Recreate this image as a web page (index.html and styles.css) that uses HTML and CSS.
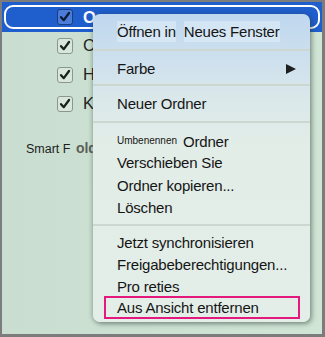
FILE: index.html
```html
<!DOCTYPE html>
<html>
<head>
<meta charset="utf-8">
<link rel="stylesheet" href="styles.css">
</head>
<body>
<div class="frame">
  <div class="row-selected">
    <div class="sel-outline">
      <span class="cb cb-sel"><svg viewBox="0 0 16 16"><path d="M3.5 8.2 L6.6 11.6 L12.6 3.4"/></svg></span>
      <span class="label label-sel">O</span>
    </div>
  </div>
  <div class="row">
    <span class="cb"><svg viewBox="0 0 16 16"><path d="M3.5 8.2 L6.6 11.6 L12.6 3.4"/></svg></span>
    <span class="label">C</span>
  </div>
  <div class="row">
    <span class="cb"><svg viewBox="0 0 16 16"><path d="M3.5 8.2 L6.6 11.6 L12.6 3.4"/></svg></span>
    <span class="label">H</span>
  </div>
  <div class="row">
    <span class="cb"><svg viewBox="0 0 16 16"><path d="M3.5 8.2 L6.6 11.6 L12.6 3.4"/></svg></span>
    <span class="label">K</span>
  </div>
  <div class="smart">Smart F <b class="smart-bold">old</b></div>

  <div class="menu">
    <div class="item item-open"><span class="hl">Öffnen in</span> <span class="hl hl-2">Neues Fenster</span></div>
    <div class="sep"></div>
    <div class="item item-sub"><span>Farbe</span><span class="arrow"></span></div>
    <div class="sep sep-b"></div>
    <div class="item">Neuer Ordner</div>
    <div class="sep"></div>
    <div class="group">
      <div class="item"><span class="tiny">Umbenennen</span> Ordner</div>
      <div class="item">Verschieben Sie</div>
      <div class="item">Ordner kopieren...</div>
      <div class="item">Löschen</div>
    </div>
    <div class="sep sep-low"></div>
    <div class="item tight">Jetzt synchronisieren</div>
    <div class="item tight">Freigabeberechtigungen...</div>
    <div class="item tight">Pro reties</div>
    <div class="item item-marked">Aus Ansicht entfernen</div>
  </div>
</div>
</body>
</html>
```
FILE: styles.css
```css
* { box-sizing: border-box; }
html, body { margin: 0; padding: 0; }
body { width: 325px; height: 337px; overflow: hidden; font-family: "Liberation Sans", Arial, sans-serif; }

.frame {
  position: relative;
  width: 325px;
  height: 337px;
  border-style: solid;
  border-color: #7c7c7c;
  border-width: 2px 3px 3px 2px;
  background: linear-gradient(to right, #c9ded0, #d1e5d6);
}

.row-selected {
  height: 30px;
  background: #1f5ecd;
  padding: 3px 2px;
}
.sel-outline {
  height: 24px;
  border: 2px solid #ffffff;
  border-radius: 9px;
  display: flex;
  align-items: center;
  padding-left: 51px;
  gap: 10px;
}

.row {
  height: 29px;
  display: flex;
  align-items: center;
  padding-left: 55px;
  gap: 10px;
}
.row:nth-of-type(2) { margin-top: -1px; }

.cb {
  width: 16px;
  height: 16px;
  border: 1px solid #8a978f;
  border-radius: 3px;
  background: #d9e6dc;
  display: flex;
}
.cb svg { width: 14px; height: 14px; }
.cb path { fill: none; stroke: #15231a; stroke-width: 2.6; stroke-linecap: round; stroke-linejoin: round; }
.cb-sel { background: #4a7dd8; border-color: #1b3c80; }
.cb-sel path { stroke: #0c1a33; }

.label { font-size: 16.5px; color: #222; }
.label-sel { color: #fff; font-weight: bold; }

.smart {
  margin-top: 22px;
  padding-left: 24px;
  font-size: 12.5px;
  color: #1d1d1d;
}
.smart-bold { color: #5b5f5b; font-size: 14px; margin-left: 2px; }

.menu {
  position: absolute;
  left: 91px;
  top: 12px;
  width: 217px;
  height: 308px;
  border-radius: 7px;
  background: linear-gradient(to bottom, #bfd7ee 0px, #cde0ee 45px, #dbe8ea 85px, #e2ede8 130px, #e4eee8 100%);
  box-shadow: 2px 2px 5px rgba(40, 60, 50, 0.45), -1px 0 4px rgba(40, 60, 50, 0.25);
  padding-top: 7px;
  font-size: 15px;
  letter-spacing: -0.2px;
  color: #151515;
}

.item {
  height: 22px;
  line-height: 22px;
  padding-left: 24px;
  white-space: nowrap;
}
.item.tight { height: 21.7px; }
.hl { background: rgba(225, 238, 250, 0.55); padding: 2px 0; }
.hl-2 { margin-left: 4px; }
.item-sub { display: flex; justify-content: space-between; align-items: center; padding-right: 14px; }
.arrow {
  width: 0; height: 0;
  border-top: 5.5px solid transparent;
  border-bottom: 5.5px solid transparent;
  border-left: 10px solid #1f1f1f;
}

.sep {
  height: 2px;
  background: #ccd7d0;
  margin: 6px 0 7px;
}
.sep-b { margin: 4px 0 7px; }
.sep-low { margin: 5px 0 6px; }

.group .item { height: 22.3px; }
.tiny { font-size: 10px; letter-spacing: 0; vertical-align: 3px; margin-right: 2px; }

.item-marked {
  margin: -1px 10px 0 11px;
  padding-left: 11px;
  border: 2px solid #e5187e;
  height: 23px;
  line-height: 19px;
}
```
